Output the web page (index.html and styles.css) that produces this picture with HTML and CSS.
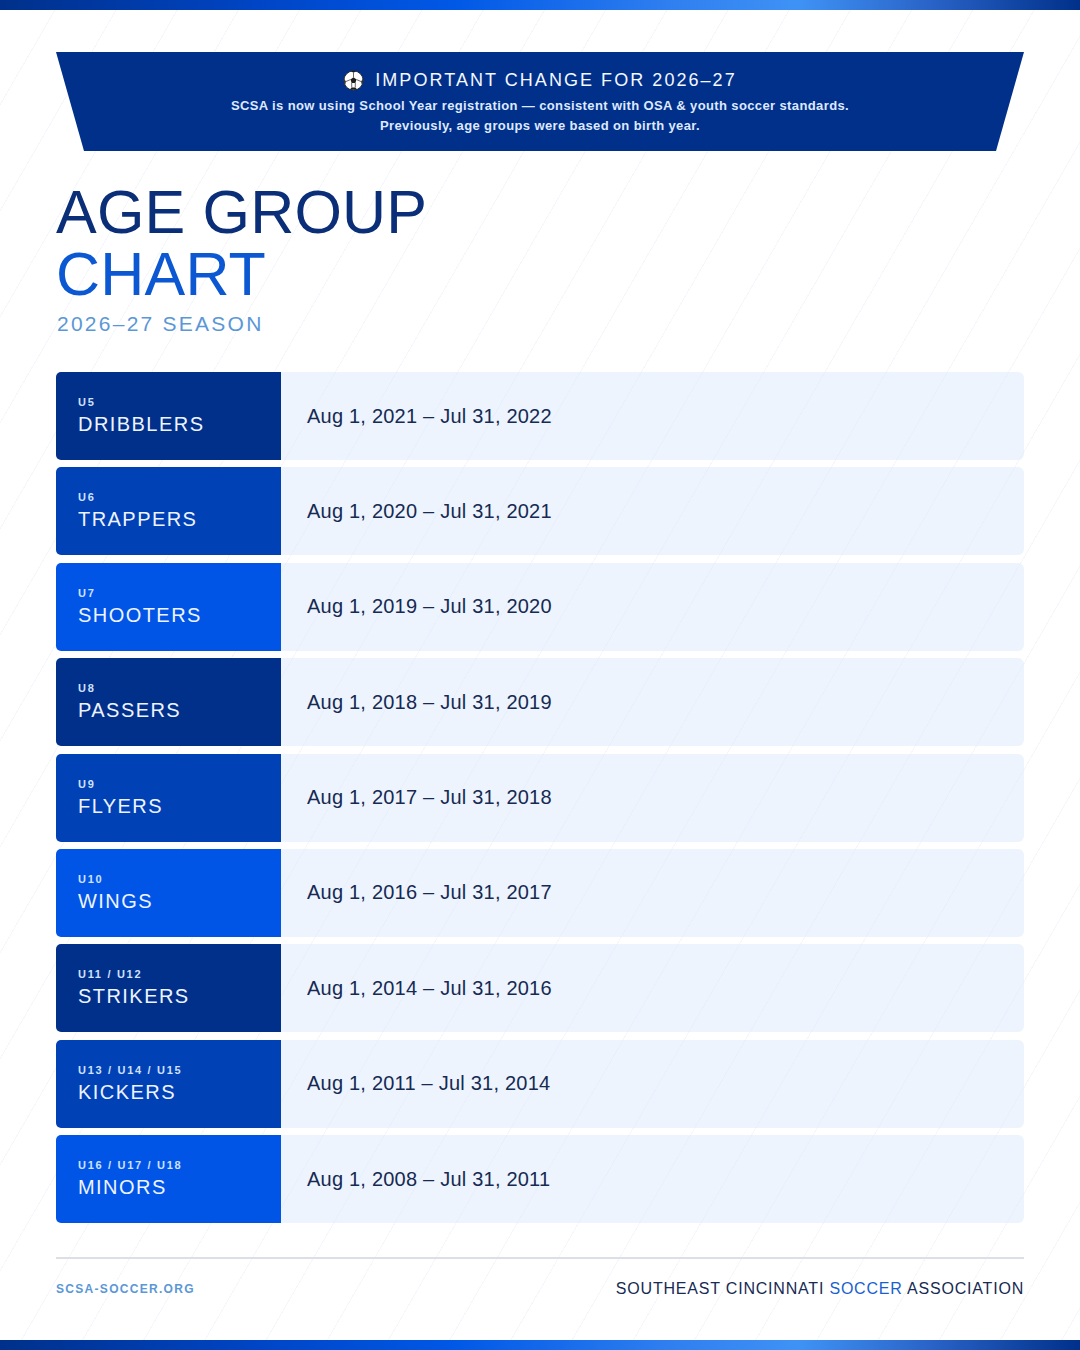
FILE: index.html
```html
<!DOCTYPE html>
<html lang="en">
<head>
<meta charset="utf-8">
<title>SCSA Age Group Chart 2026–27</title>
<link rel="stylesheet" href="styles.css">
</head>
<body>
<div class="page">
  <div class="bar"></div>
  <main class="content">
    <section class="notice">
      <h2 class="notice-title">
        <svg class="ball" viewBox="0 0 24 24" aria-hidden="true">
          <circle cx="12" cy="12" r="11" fill="#ffffff" stroke="#2a2a2a" stroke-width="1"/>
          <polygon points="12,8.4 15.4,10.9 14.1,14.8 9.9,14.8 8.6,10.9" fill="#1e1e1e"/>
          <path d="M9 1.4 L12 3.2 L15 1.4 A11 11 0 0 0 9 1.4 Z" fill="#1e1e1e"/>
          <path d="M1.3 10 L3.3 13.2 L2.5 16.8 A11 11 0 0 1 1.3 10 Z" fill="#1e1e1e"/>
          <path d="M22.7 10 L20.7 13.2 L21.5 16.8 A11 11 0 0 0 22.7 10 Z" fill="#1e1e1e"/>
          <path d="M8 21.9 L10 20 L14 20 L16 21.9 A11 11 0 0 1 8 21.9 Z" fill="#1e1e1e"/>
          <path d="M12 3.2 L12 8.4 M15.4 10.9 L20.7 13.2 M8.6 10.9 L3.3 13.2 M9.9 14.8 L10 20 M14.1 14.8 L14 20" stroke="#2a2a2a" stroke-width="0.8" fill="none"/>
        </svg>
        <span>IMPORTANT CHANGE FOR 2026–27</span>
      </h2>
      <p class="notice-text">SCSA is now using School Year registration — consistent with OSA &amp; youth soccer standards.<br>Previously, age groups were based on birth year.</p>
    </section>

    <header class="heading">
      <h1 class="title"><span class="title-dark">AGE GROUP</span><span class="title-bright">CHART</span></h1>
      <p class="season">2026–27 SEASON</p>
    </header>

    <section class="chart">
      <div class="row">
        <div class="label tone-1"><span class="ages">U5</span><span class="name">DRIBBLERS</span></div>
        <div class="dates">Aug 1, 2021 – Jul 31, 2022</div>
      </div>
      <div class="row">
        <div class="label tone-2"><span class="ages">U6</span><span class="name">TRAPPERS</span></div>
        <div class="dates">Aug 1, 2020 – Jul 31, 2021</div>
      </div>
      <div class="row">
        <div class="label tone-3"><span class="ages">U7</span><span class="name">SHOOTERS</span></div>
        <div class="dates">Aug 1, 2019 – Jul 31, 2020</div>
      </div>
      <div class="row">
        <div class="label tone-1"><span class="ages">U8</span><span class="name">PASSERS</span></div>
        <div class="dates">Aug 1, 2018 – Jul 31, 2019</div>
      </div>
      <div class="row">
        <div class="label tone-2"><span class="ages">U9</span><span class="name">FLYERS</span></div>
        <div class="dates">Aug 1, 2017 – Jul 31, 2018</div>
      </div>
      <div class="row">
        <div class="label tone-3"><span class="ages">U10</span><span class="name">WINGS</span></div>
        <div class="dates">Aug 1, 2016 – Jul 31, 2017</div>
      </div>
      <div class="row">
        <div class="label tone-1"><span class="ages">U11 / U12</span><span class="name">STRIKERS</span></div>
        <div class="dates">Aug 1, 2014 – Jul 31, 2016</div>
      </div>
      <div class="row">
        <div class="label tone-2"><span class="ages">U13 / U14 / U15</span><span class="name">KICKERS</span></div>
        <div class="dates">Aug 1, 2011 – Jul 31, 2014</div>
      </div>
      <div class="row">
        <div class="label tone-3"><span class="ages">U16 / U17 / U18</span><span class="name">MINORS</span></div>
        <div class="dates">Aug 1, 2008 – Jul 31, 2011</div>
      </div>
    </section>

    <footer class="footer">
      <span class="site">SCSA-SOCCER.ORG</span>
      <span class="org">SOUTHEAST CINCINNATI <span class="org-accent">SOCCER</span> ASSOCIATION</span>
    </footer>
  </main>
  <div class="bar"></div>
</div>
</body>
</html>
```

FILE: styles.css
```css
* { box-sizing: border-box; }

html, body {
  margin: 0;
  padding: 0;
}

body {
  width: 1080px;
  height: 1350px;
  overflow: hidden;
  font-family: "Liberation Sans", Arial, sans-serif;
  background-color: #ffffff;
  background-image: repeating-linear-gradient(120deg, rgba(255,255,255,0) 0 52px, rgba(20,70,160,0.045) 52px 53px);
}

.page {
  display: flex;
  flex-direction: column;
  height: 1350px;
}

.bar {
  height: 10px;
  flex: none;
  background: linear-gradient(90deg, #00308a 0%, #0046c8 25%, #0058e6 42%, #2f7ff0 62%, #3f92f5 74%, #2a64c8 86%, #00308a 100%);
}

.content {
  flex: 1;
  display: flex;
  flex-direction: column;
  padding: 42px 56px 0;
}

/* Notice banner */
.notice {
  background: #00308a;
  clip-path: polygon(0 0, 100% 0, calc(100% - 28px) 100%, 28px 100%);
  height: 99px;
  padding: 16px 60px 0;
  text-align: center;
  color: #ffffff;
}

.notice-title {
  margin: 0;
  display: flex;
  align-items: center;
  justify-content: center;
  gap: 11px;
  font-size: 18px;
  font-weight: 400;
  letter-spacing: 2.05px;
  line-height: 24px;
  color: #f4f8ff;
}

.ball {
  width: 21px;
  height: 21px;
  flex: none;
}

.notice-text {
  margin: 4px 0 0;
  font-size: 13px;
  font-weight: 700;
  line-height: 20px;
  color: #dfe9ff;
  letter-spacing: 0.38px;
}

/* Heading */
.heading {
  margin-top: 30px;
}

.title {
  margin: 0;
  display: flex;
  flex-direction: column;
  font-size: 61px;
  font-weight: 400;
  line-height: 62px;
  letter-spacing: 0.2px;
}

.title-dark { color: #0a2f78; }
.title-bright { color: #0b58d2; }

.season {
  margin: 6px 0 0 1px;
  font-size: 21px;
  line-height: 26px;
  letter-spacing: 2.25px;
  color: #5b97d6;
}

/* Chart */
.chart {
  margin-top: 35px;
  display: flex;
  flex-direction: column;
  gap: 7.4px;
}

.row {
  display: flex;
  height: 88px;
}

.label {
  width: 225px;
  flex: none;
  display: flex;
  flex-direction: column;
  justify-content: center;
  padding: 0 0 1px 22px;
  border-radius: 5px 0 0 5px;
}

.tone-1 { background: #00308a; }
.tone-2 { background: #0041b5; }
.tone-3 { background: #0055e6; }

.ages {
  font-size: 11px;
  font-weight: 700;
  letter-spacing: 1.7px;
  line-height: 14px;
  color: #cfe1ff;
}

.name {
  margin-top: 3px;
  font-size: 20px;
  letter-spacing: 1.45px;
  line-height: 24px;
  color: #eef4ff;
}

.dates {
  flex: 1;
  display: flex;
  align-items: center;
  padding: 0 0 0 26px;
  background: rgba(214, 230, 252, 0.45);
  border-radius: 0 6px 6px 0;
  font-size: 20px;
  letter-spacing: 0.22px;
  color: #162a52;
}

/* Footer */
.footer {
  margin-top: 34px;
  border-top: 2px solid #dcdfe4;
  padding-top: 21px;
  display: flex;
  justify-content: space-between;
  align-items: center;
}

.site {
  font-size: 12px;
  font-weight: 700;
  letter-spacing: 1.3px;
  color: #5b97d6;
}

.org {
  font-size: 16px;
  letter-spacing: 0.8px;
  color: #162a52;
}

.org-accent { color: #1a5fd0; }
```
